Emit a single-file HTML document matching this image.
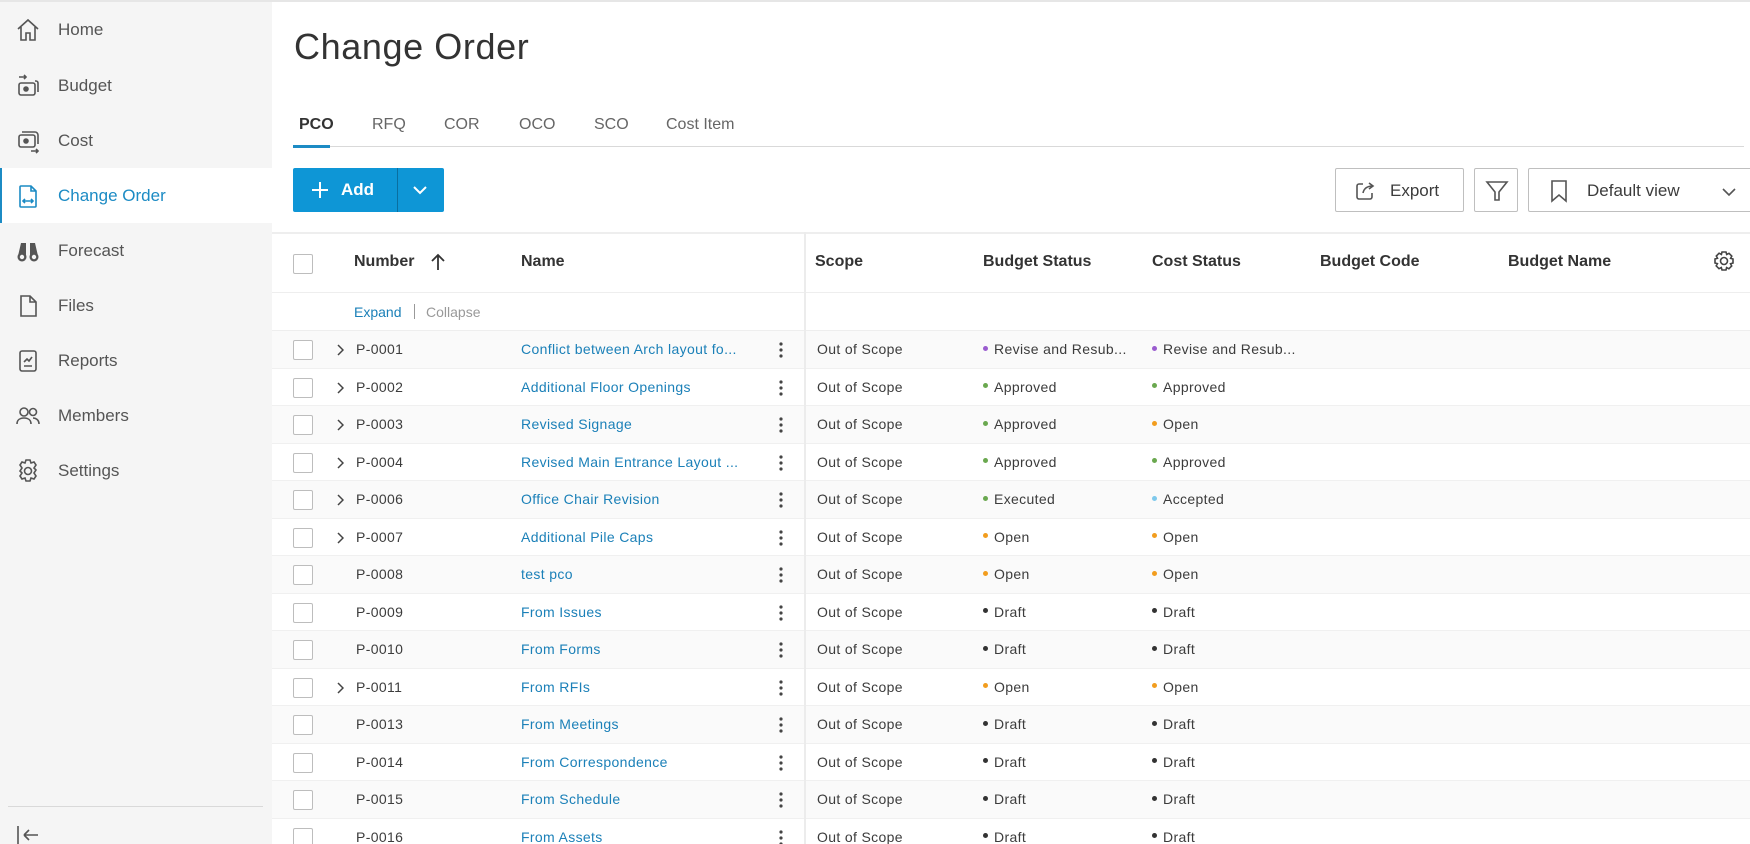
<!DOCTYPE html>
<html style="overflow:hidden;width:1750px;height:844px"><head><meta charset="utf-8"><style>
*{box-sizing:border-box;margin:0;padding:0}
body{width:1750px;height:844px;overflow:hidden;font-family:"Liberation Sans",sans-serif;background:#fff;color:#3c3c3c;position:relative}
.a{position:absolute}
#side{left:0;top:0;width:272px;height:844px;background:#f5f5f5;border-top:2px solid #e6e6e6}
.nav{position:absolute;left:0;width:272px;height:55px;display:flex;align-items:center;font-size:17px;color:#555}
.nav svg{position:absolute;left:14px;width:28px;height:28px}
.nav span{position:absolute;left:58px}
.nav.act{background:#fff;color:#1c8bc4;border-left:2px solid #1c8bc4}
#topline{left:272px;top:0;width:1478px;height:2px;background:#e6e6e6}
h1{position:absolute;left:294px;top:26px;font-weight:400;font-size:36px;color:#333;letter-spacing:.6px}
.tab{position:absolute;top:116px;font-size:16px;color:#666}
.btn{position:absolute;border:1px solid #bfbfbf;border-radius:2px;background:#fff}
.hdr{position:absolute;top:253px;font-size:16px;font-weight:bold;color:#333}
.row{position:absolute;left:272px;width:1478px;height:37.5px;border-bottom:1px solid #f0f0f0}
.row.alt{background:#fafafa}
.cb{position:absolute;left:21px;top:9px;width:20px;height:20px;border:1px solid #bdbdbd;border-radius:2px;background:#fff}
.c{position:absolute;top:10px;font-size:14px;color:#3c3c3c;white-space:nowrap;letter-spacing:.35px}
.lk{color:#1b80b8}
.dot{display:inline-block;width:5px;height:5px;border-radius:50%;margin-right:6px;vertical-align:middle;position:relative;top:-2px}
</style></head><body>
<div id="topline" class="a"></div>
<div id="side" class="a">
<div class="nav" style="top:0"><svg viewBox="0 0 28 28" fill="none" stroke="#555" stroke-width="1.6"><path d="M4 13L14 4l10 9M7 11v13h5v-7h4v7h5V11"/></svg><span>Home</span></div>
<div class="nav" style="top:56px"><svg viewBox="0 0 28 28" fill="none" stroke="#555" stroke-width="1.6"><path d="M5 5h7m-2-2l2 2-2 2"/><rect x="5" y="11" width="16" height="12" rx="2"/><circle cx="12" cy="17" r="2" fill="#555"/><path d="M21 9h1a2 2 0 012 2v9"/></svg><span>Budget</span></div>
<div class="nav" style="top:111px"><svg viewBox="0 0 28 28" fill="none" stroke="#555" stroke-width="1.6"><rect x="5" y="8" width="16" height="12" rx="2"/><circle cx="12" cy="14" r="2" fill="#555"/><path d="M8 5h13a3 3 0 013 3v9M17 24h7m-2-2l2 2-2 2"/></svg><span>Cost</span></div>
<div class="nav act" style="top:166px"><svg viewBox="0 0 28 28" fill="none" stroke="#1c8bc4" stroke-width="1.6" style="left:12px"><path d="M7 4h10l5 5v15a1 1 0 01-1 1H7a1 1 0 01-1-1V5a1 1 0 011-1zM17 4v5h5"/><path d="M9 19h10M11 17l-2 2 2 2M17 17l2 2-2 2"/></svg><span style="left:56px">Change Order</span></div>
<div class="nav" style="top:221px"><svg viewBox="0 0 28 28" fill="#555"><circle cx="8" cy="20" r="4.5"/><circle cx="20" cy="20" r="4.5"/><path d="M4 19l3-13h5v13zM16 6h5l3 13h-8z"/><circle cx="8" cy="20" r="2.2" fill="#f5f5f5"/><circle cx="20" cy="20" r="2.2" fill="#f5f5f5"/></svg><span>Forecast</span></div>
<div class="nav" style="top:276px"><svg viewBox="0 0 28 28" fill="none" stroke="#555" stroke-width="1.6"><path d="M7 4h9l6 6v14H7zM16 4v6h6"/></svg><span>Files</span></div>
<div class="nav" style="top:331px"><svg viewBox="0 0 28 28" fill="none" stroke="#555" stroke-width="1.6"><rect x="6" y="4" width="16" height="20" rx="2"/><path d="M10 15l3-3 2 2 3-4M10 19h8"/></svg><span>Reports</span></div>
<div class="nav" style="top:386px"><svg viewBox="0 0 28 28" fill="none" stroke="#555" stroke-width="1.6"><circle cx="10" cy="10" r="4"/><path d="M3 22c0-4 3-6 7-6s7 2 7 6"/><circle cx="19" cy="10" r="3.5"/><path d="M19 16c3 0 6 2 6 6"/></svg><span>Members</span></div>
<div class="nav" style="top:441px"><svg viewBox="0 0 28 28" fill="none" stroke="#555" stroke-width="1.6"><circle cx="14" cy="14" r="3.5"/><path d="M12 3h4l1 3 3-1 2 3-2 3 2 2v0l-2 3 2 3-2 3-3-1-1 3h-4l-1-3-3 1-2-3 2-3-2-2 2-3-2-3 2-3 3 1z"/></svg><span>Settings</span></div>
<div class="a" style="left:8px;top:804px;width:255px;height:1px;background:#d9d9d9"></div>
<svg class="a" style="left:16px;top:822px" width="24" height="22" viewBox="0 0 24 22" fill="none" stroke="#555" stroke-width="1.6"><path d="M2 2v20M8 11h14M8 11l5-5M8 11l5 5"/></svg>
</div>

<h1>Change Order</h1>
<div class="tab" style="left:299px;color:#333;font-weight:bold">PCO</div>
<div class="tab" style="left:372px">RFQ</div>
<div class="tab" style="left:444px">COR</div>
<div class="tab" style="left:519px">OCO</div>
<div class="tab" style="left:594px">SCO</div>
<div class="tab" style="left:666px">Cost Item</div>
<div class="a" style="left:293px;top:146px;width:1451px;height:1px;background:#d9d9d9"></div>
<div class="a" style="left:293px;top:145px;width:37px;height:3px;background:#1c8bc4"></div>

<div class="a" style="left:293px;top:168px;width:151px;height:44px;background:#0e96d6;border-radius:2px;color:#fff;font-size:17px;font-weight:bold">
<svg class="a" style="left:18px;top:13px" width="18" height="18" viewBox="0 0 18 18" stroke="#fff" stroke-width="2"><path d="M9 1v16M1 9h16"/></svg>
<span class="a" style="left:48px;top:12px">Add</span>
<div class="a" style="left:104px;top:0;width:1px;height:44px;background:#0a6fa0"></div>
<svg class="a" style="left:119px;top:16px" width="16" height="12" viewBox="0 0 16 12" fill="none" stroke="#fff" stroke-width="2"><path d="M2 3l6 6 6-6"/></svg>
</div>

<div class="btn" style="left:1335px;top:168px;width:129px;height:44px">
<svg class="a" style="left:18px;top:11px" width="22" height="22" viewBox="0 0 22 22" fill="none" stroke="#555" stroke-width="1.6"><path d="M9 4H5a2 2 0 00-2 2v11a2 2 0 002 2h11a2 2 0 002-2v-4M9 13c1-5 5-7 10-7M15 3l4 3-4 3"/></svg>
<span class="a" style="left:54px;top:12px;font-size:17px;color:#3c3c3c">Export</span></div>
<div class="btn" style="left:1474px;top:168px;width:44px;height:44px">
<svg class="a" style="left:10px;top:10px" width="24" height="24" viewBox="0 0 24 24" fill="none" stroke="#555" stroke-width="1.6"><path d="M2 3h20l-8 10v8h-4v-8z"/></svg></div>
<div class="btn" style="left:1528px;top:168px;width:230px;height:44px">
<svg class="a" style="left:20px;top:10px" width="20" height="24" viewBox="0 0 20 24" fill="none" stroke="#555" stroke-width="1.6"><path d="M3 2h14v20l-7-6-7 6z"/></svg>
<span class="a" style="left:58px;top:12px;font-size:17px;color:#3c3c3c">Default view</span>
<svg class="a" style="left:192px;top:17px" width="16" height="12" viewBox="0 0 16 12" fill="none" stroke="#555" stroke-width="1.6"><path d="M2 3l6 6 6-6"/></svg></div>

<div class="a" style="left:272px;top:232px;width:1478px;height:2px;background:#eee"></div>
<div class="a" style="left:272px;top:292px;width:1478px;height:1px;background:#eee"></div>
<div class="a" style="left:272px;top:330px;width:1478px;height:2px;background:#eee"></div>
<div class="a" style="left:293px;top:254px;width:20px;height:20px;border:1px solid #bdbdbd;border-radius:2px"></div>
<div class="hdr" style="left:354px">Number</div>
<svg class="a" style="left:430px;top:253px" width="16" height="18" viewBox="0 0 16 18" fill="none" stroke="#333" stroke-width="1.8"><path d="M8 17V2M2 8l6-6 6 6"/></svg>
<div class="hdr" style="left:521px">Name</div>
<div class="hdr" style="left:815px">Scope</div>
<div class="hdr" style="left:983px">Budget Status</div>
<div class="hdr" style="left:1152px">Cost Status</div>
<div class="hdr" style="left:1320px">Budget Code</div>
<div class="hdr" style="left:1508px">Budget Name</div>
<svg class="a" style="left:1713px;top:250px" width="22" height="22" viewBox="0 0 22 22" fill="none" stroke="#444" stroke-width="1.6"><circle cx="11" cy="11" r="3.5"/><path d="M9 2h4l.7 2.5 2.3-1.2 2.8 2.8-1.2 2.3L20 9v4l-2.5.7 1.2 2.3-2.8 2.8-2.3-1.2L13 20H9l-.7-2.5-2.3 1.2-2.8-2.8 1.2-2.3L2 13V9l2.5-.7-1.2-2.3 2.8-2.8 2.3 1.2z"/></svg>
<div class="a" style="left:354px;top:304px;font-size:14px;color:#1b80b8">Expand</div>
<div class="a" style="left:414px;top:304px;width:1px;height:15px;background:#999"></div>
<div class="a" style="left:426px;top:304px;font-size:14px;color:#999">Collapse</div>

<div id="rows"></div>
<div class="a" style="left:804px;top:232px;width:2px;height:612px;background:#ececec"></div>
<script>
var P='#9a5ccf',G='#6aa84f',O='#f29d1e',K='#333',B='#7fc9ec';
var d=[["P-0001","Conflict between Arch layout fo...",1,["Revise and Resub...",P],["Revise and Resub...",P]],
["P-0002","Additional Floor Openings",1,["Approved",G],["Approved",G]],
["P-0003","Revised Signage",1,["Approved",G],["Open",O]],
["P-0004","Revised Main Entrance Layout ...",1,["Approved",G],["Approved",G]],
["P-0006","Office Chair Revision",1,["Executed",G],["Accepted",B]],
["P-0007","Additional Pile Caps",1,["Open",O],["Open",O]],
["P-0008","test pco",0,["Open",O],["Open",O]],
["P-0009","From Issues",0,["Draft",K],["Draft",K]],
["P-0010","From Forms",0,["Draft",K],["Draft",K]],
["P-0011","From RFIs",1,["Open",O],["Open",O]],
["P-0013","From Meetings",0,["Draft",K],["Draft",K]],
["P-0014","From Correspondence",0,["Draft",K],["Draft",K]],
["P-0015","From Schedule",0,["Draft",K],["Draft",K]],
["P-0016","From Assets",0,["Draft",K],["Draft",K]]];
var h='';d.forEach(function(r,i){var t=331+i*37.5;
h+='<div class="row'+(i%2==0?' alt':'')+'" style="top:'+t+'px"><div class="cb"></div>'+
(r[2]?'<svg class="a" style="left:64px;top:13px" width="8" height="12" viewBox="0 0 8 12" fill="none" stroke="#444" stroke-width="1.5"><path d="M2 1l5 5-5 5"/></svg>':'')+
'<div class="c" style="left:84px">'+r[0]+'</div><div class="c lk" style="left:249px">'+r[1]+'</div>'+
'<svg class="a" style="left:506px;top:10px" width="6" height="18" viewBox="0 0 6 18" fill="#444"><circle cx="3" cy="3" r="1.6"/><circle cx="3" cy="9" r="1.6"/><circle cx="3" cy="15" r="1.6"/></svg>'+
'<div class="c" style="left:545px">Out of Scope</div>'+
'<div class="c" style="left:711px"><span class="dot" style="background:'+r[3][1]+'"></span>'+r[3][0]+'</div>'+
'<div class="c" style="left:880px"><span class="dot" style="background:'+r[4][1]+'"></span>'+r[4][0]+'</div></div>';});
document.getElementById('rows').innerHTML=h;
</script>
</body></html>
